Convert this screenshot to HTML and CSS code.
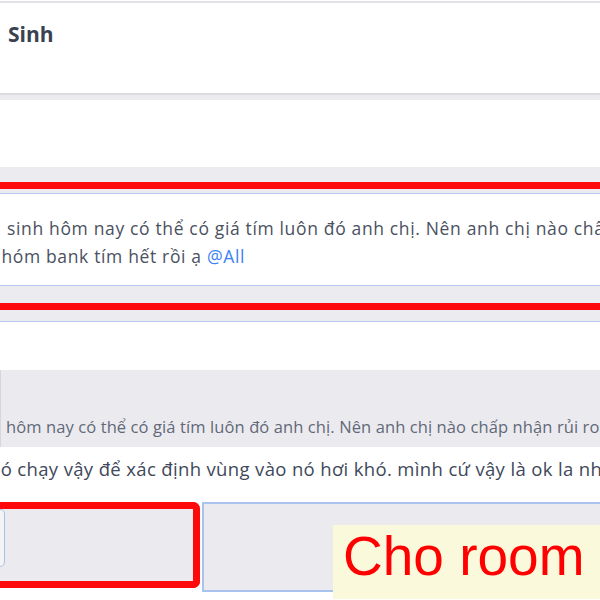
FILE: index.html
```html
<!DOCTYPE html>
<html lang="vi">
<head>
    <meta charset="UTF-8">
    <title>Sinh</title>
    <link rel="stylesheet" href="styles.css">
</head>
<body>
    <div class="page">
        <div class="topline"></div>
        <div class="header">Sinh</div>
        <div class="divider"></div>
        <div class="blank"></div>
        <div class="band"></div>

        <div class="mark">
            <div class="gap-top"></div>
            <div class="msg">
                <p class="line first">sinh hôm nay có thể có giá tím luôn đó anh chị. Nên anh chị nào chấp nhận rủi ro</p>
                <p class="line second">nhóm bank tím hết rồi ạ <span class="tag">@All</span></p>
            </div>
            <div class="gap-bottom"></div>
        </div>

        <div class="reply">
            <div class="quote">
                <p class="quote-text">hôm nay có thể có giá tím luôn đó anh chị. Nên anh chị nào chấp nhận rủi ro</p>
            </div>
            <p class="reply-text">nó chạy vậy để xác định vùng vào nó hơi khó. mình cứ vậy là ok la nhãa</p>
        </div>

        <div class="composer">
            <div class="pick">
                <div class="pick-edge"></div>
            </div>
            <div class="input">
                <div class="label">Cho room</div>
            </div>
        </div>
    </div>
</body>
</html>
```

FILE: styles.css
```css
body, html {
    margin: 0;
    background: white;
    font-family: 'Open Sans', sans-serif;
}
.page {
    width: 600px;
    height: 600px;
    overflow: hidden;
}
p {
    margin: 0;
    white-space: nowrap;
}
.topline {
    margin-top: 1px;
    height: 2px;
    background-color: #e2e2e6;
}
.header {
    height: 90px;
    box-sizing: border-box;
    padding: 17px 0 0 8px;
    font-size: 21px;
    line-height: 28px;
    font-weight: 700;
    color: #3a4252;
}
.divider {
    height: 7px;
    box-sizing: border-box;
    border-top: 2px solid #dcdce0;
    background-color: #ececf0;
}
.blank {
    height: 67px;
}
.band {
    height: 15px;
    background-color: #ebebf0;
}
.mark {
    border-top: 7px solid #ff0a0a;
    border-bottom: 7px solid #ff0a0a;
    background-color: #ebebf0;
}
.gap-top {
    height: 4px;
    border-bottom: 1px solid #b4c8ee;
}
.msg {
    height: 92px;
    box-sizing: border-box;
    padding-top: 20px;
    background-color: white;
    border-bottom: 1px solid #b4c8ee;
    font-size: 17.5px;
    letter-spacing: 0.65px;
    line-height: 28px;
    color: #4a5161;
}
.line.first {
    padding-left: 7px;
}
.line.second {
    margin-left: -10px;
}
.tag {
    color: #3b82f6;
}
.gap-bottom {
    height: 17px;
}
.reply {
    background-color: #ebebf0;
    padding-top: 11px;
}
.quote {
    border-top: 1px solid #b4c8ee;
    background-color: white;
    padding-top: 48px;
}
.quote-text {
    background-color: #ebebef;
    height: 77px;
    box-sizing: border-box;
    padding: 47px 0 0 5px;
    font-size: 16.5px;
    letter-spacing: 0.1px;
    line-height: 20px;
    color: #626878;
    border-left: 1px solid #d6d6dc;
}
.reply-text {
    background-color: white;
    height: 55px;
    box-sizing: border-box;
    padding-top: 12px;
    margin-left: -11px;
    font-size: 18.5px;
    letter-spacing: 0.35px;
    line-height: 20px;
    color: #40485a;
}
.composer {
    display: flex;
    height: 98px;
    background-color: white;
}
.pick {
    width: 200px;
    height: 86px;
    box-sizing: border-box;
    border: 7px solid #ff0a0a;
    border-left: none;
    border-radius: 0 7px 7px 0;
    background-color: #ebebef;
}
.pick-edge {
    width: 5px;
    height: 58px;
    box-sizing: border-box;
    border: 1px solid #a9c0e8;
    border-left: none;
    border-radius: 0 5px 5px 0;
    background-color: #f4f4f7;
}
.input {
    margin-left: 2px;
    flex: 1;
    height: 90px;
    box-sizing: border-box;
    padding-top: 21px;
    border-top: 2px solid #a9c3ee;
    border-left: 2px solid #a9c3ee;
    border-bottom: 2px solid #a9c3ee;
    background-color: #ebebef;
}
.label {
    margin-left: 129px;
    height: 74px;
    box-sizing: border-box;
    padding-left: 10px;
    background-color: #fbf9dc;
    font-family: 'Liberation Sans', Arial, sans-serif;
    font-size: 55px;
    line-height: 62px;
    color: #ff0000;
}
```
